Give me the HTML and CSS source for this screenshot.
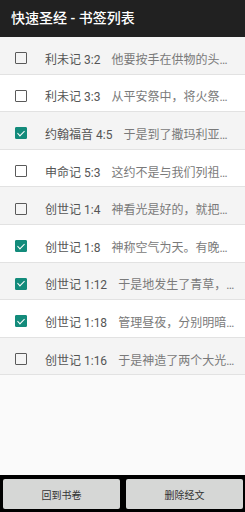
FILE: index.html
```html
<!DOCTYPE html>
<html lang="zh">
<head>
<meta charset="utf-8">
<link rel="stylesheet" href="styles.css">
</head>
<body>
<div class="app">
  <header class="bar">快速圣经 - 书签列表</header>
  <ul class="list">
    <li class="row odd"><span class="cb"></span><span class="ref">利未记 3:2</span><span class="verse">他要按手在供物的头…</span></li>
    <li class="row"><span class="cb"></span><span class="ref">利未记 3:3</span><span class="verse">从平安祭中，将火祭…</span></li>
    <li class="row odd"><span class="cb on"></span><span class="ref">约翰福音 4:5</span><span class="verse">于是到了撒玛利亚…</span></li>
    <li class="row"><span class="cb"></span><span class="ref">申命记 5:3</span><span class="verse">这约不是与我们列祖…</span></li>
    <li class="row odd"><span class="cb"></span><span class="ref">创世记 1:4</span><span class="verse">神看光是好的，就把…</span></li>
    <li class="row"><span class="cb on"></span><span class="ref">创世记 1:8</span><span class="verse">神称空气为天。有晚…</span></li>
    <li class="row odd"><span class="cb on"></span><span class="ref">创世记 1:12</span><span class="verse">于是地发生了青草，…</span></li>
    <li class="row"><span class="cb on"></span><span class="ref">创世记 1:18</span><span class="verse">管理昼夜，分别明暗…</span></li>
    <li class="row odd"><span class="cb"></span><span class="ref">创世记 1:16</span><span class="verse">于是神造了两个大光…</span></li>
  </ul>
  <footer class="actions">
    <button class="btn">回到书卷</button>
    <button class="btn">删除经文</button>
  </footer>
</div>
</body>
</html>
```
FILE: styles.css
```css
* { box-sizing: border-box; }
html, body { margin: 0; padding: 0; }
body {
  width: 245px;
  height: 512px;
  background: #fafafa;
  font-family: Roboto, "Noto Sans CJK SC", sans-serif;
}
.app {
  display: flex;
  flex-direction: column;
  height: 512px;
}
.bar {
  height: 37px;
  background: #212121;
  color: #fff;
  font-size: 14px;
  font-weight: 500;
  line-height: 37px;
  padding-left: 11px;
  flex: none;
}
.list {
  list-style: none;
  margin: 0;
  padding: 0;
  flex: 1;
}
.row {
  height: 37.6px;
  display: flex;
  align-items: center;
  padding: 6px 4px 0 15px;
  border-bottom: 1px solid #e2e2e2;
  background: #fff;
  font-size: 12px;
  white-space: nowrap;
}
.row.odd { background: #f4f4f4; }
.cb {
  flex: none;
  width: 12px;
  height: 12px;
  border: 1.5px solid #5a5a5a;
  border-radius: 1px;
  margin-right: 18px;
  position: relative;
}
.cb.on {
  background: #138b7b;
  border-color: #138b7b;
}
.cb.on::after {
  content: "";
  position: absolute;
  left: 2.5px;
  top: 0.5px;
  width: 3px;
  height: 6px;
  border-right: 1.5px solid #fff;
  border-bottom: 1.5px solid #fff;
  transform: rotate(45deg);
}
.ref {
  flex: none;
  color: #555;
  margin-right: 11px;
}
.verse {
  flex: 1;
  min-width: 0;
  color: #7a7a7a;
}
.actions {
  flex: none;
  height: 37px;
  background: #000;
  display: flex;
  gap: 6px;
  padding: 4px 2px 3px 3px;
}
.btn {
  flex: 1;
  border: none;
  border-radius: 2px;
  background: #d6d7d6;
  color: #333;
  font-family: Roboto, "Noto Sans CJK SC", sans-serif;
  font-size: 10px;
  padding: 0;
}
```
